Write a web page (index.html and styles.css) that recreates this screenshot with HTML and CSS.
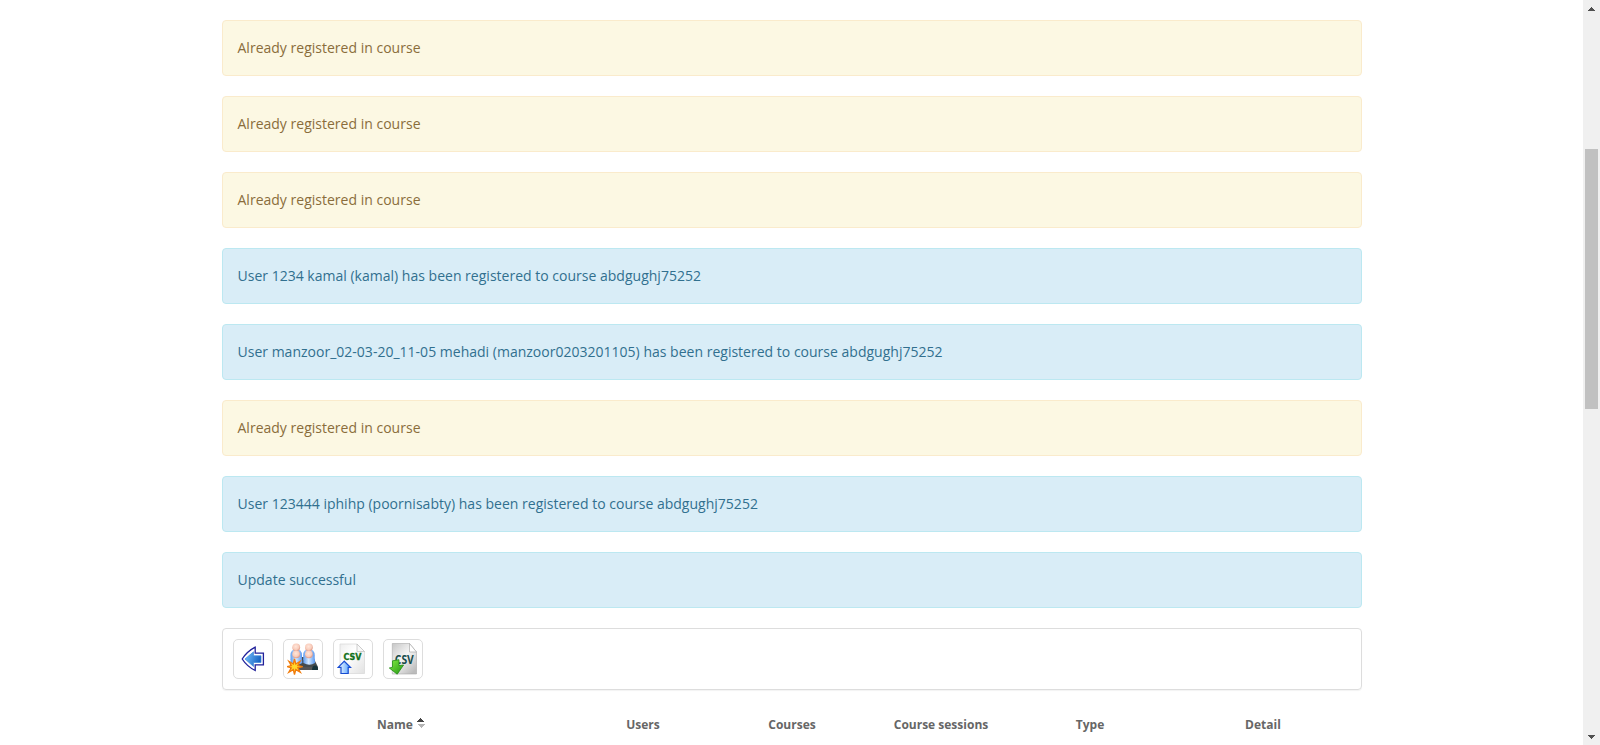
FILE: index.html
```html
<!DOCTYPE html>
<html lang="en">
<head>
<meta charset="utf-8">
<title>Classes</title>
<link rel="stylesheet" href="styles.css">
</head>
<body>
<div class="viewport">
<main class="page">
<div class="container">
<div class="alert warning">Already registered in course</div>
<div class="alert warning">Already registered in course</div>
<div class="alert warning">Already registered in course</div>
<div class="alert info">User 1234 kamal (kamal) has been registered to course abdgughj75252</div>
<div class="alert info">User manzoor_02-03-20_11-05 mehadi (manzoor0203201105) has been registered to course abdgughj75252</div>
<div class="alert warning">Already registered in course</div>
<div class="alert info">User 123444 iphihp (poornisabty) has been registered to course abdgughj75252</div>
<div class="alert info">Update successful</div>
<div class="toolbar">
<a class="tool" aria-label="Back"><svg width="32" height="32" viewBox="0 0 32 32">
<defs><linearGradient id="back" x2="1" y2=".3"><stop stop-color="#78c4ff"/><stop offset="1" stop-color="#1965c4"/></linearGradient></defs>
<path d="M5.2 16Q10 8.500 18.200 4.200V10.200H26.400V21.800H18.200V27.500Q10 23.500 5.200 16Z" fill="#fff" stroke="#20209a" stroke-width="1.300"/>
<path d="M8 16 16.500 8.800V12.800H24V19.500H16.500V23.500Z" fill="url(#back)" stroke="#3c86da" stroke-width=".7"/></svg></a>
<a class="tool" aria-label="Add classes"><svg width="32" height="32" viewBox="0 0 32 32">
<defs><linearGradient id="body" x2="1"><stop stop-color="#5f9df0"/><stop offset=".45" stop-color="#d6eaff"/><stop offset="1" stop-color="#5a98f0"/></linearGradient>
<radialGradient id="head" cx=".45" cy=".4" r=".6"><stop stop-color="#ffe6da"/><stop offset=".65" stop-color="#f9cdbc"/><stop offset="1" stop-color="#df9783"/></radialGradient></defs>
<path d="M3 20 7 14H26L31 24V27H3Z" fill="#454b4d"/><path d="M8 24H26L28 27H5Z" fill="#555"/><path d="M25 27Q25 22.500 28 22.500T31 27Z" fill="#17333b"/>
<g id="pair"><path d="M3.500 12.500Q3.500 6 9.200 6T15 12.500V17H3.500Z" fill="url(#body)"/><circle cx="9.200" cy="4.300" r="3.900" fill="url(#head)"/><path d="M3.700 20Q3 12 9.200 12T15.300 20Q10 23.500 3.700 20Z" fill="url(#body)"/><circle cx="9.200" cy="11.300" r="3.900" fill="url(#head)"/></g><use href="#pair" x="12.700"/>
<path d="m7.500 16 1.300 5 4.300-2.700-2.300 4.300 4.900 1-4.900 1.200 2.500 4.500-4.500-2.700-1.300 4.900-1.200-4.900-4.500 2.700 2.500-4.500-4-1.200 4-1-2.400-4.300 4.400 2.700Z" fill="#ffd72c" stroke="#f17b0b" stroke-width="1.300"/></svg></a>
<a class="tool" aria-label="Import users"><svg width="32" height="32" viewBox="0 0 32 32">
<defs><linearGradient id="paper" x2="1" y2="1"><stop stop-color="#eee"/><stop offset=".4" stop-color="#fff"/><stop offset="1" stop-color="#e1e1e1"/></linearGradient><linearGradient id="up" x2="1"><stop stop-color="#fff"/><stop offset="1" stop-color="#4a9dff"/></linearGradient></defs>
<path d="M3 1H20L27.500 8.500V30.500H3Z" fill="url(#paper)" stroke="#d7d7d7" stroke-width=".7"/><path d="M20 1V8.500H27.500Z" fill="#f8f8f8" stroke="#bbb" stroke-width=".7"/>
<text x="6.500" y="17" class="csv-import" textLength="18" lengthAdjust="spacingAndGlyphs">CSV</text>
<path d="M7.300 18.200 13.500 24.300H11.200V30.500H4V24.300H1.200Z" fill="url(#up)" stroke="#164bd2" stroke-width="1.200"/></svg></a>
<a class="tool" aria-label="Export users"><svg width="32" height="32" viewBox="0 0 32 32">
<defs><linearGradient id="sheet" x2=".8" y2="1"><stop stop-color="#c6c6c6"/><stop offset=".5" stop-color="#f5f5f5"/><stop offset="1" stop-color="#bcbcbc"/></linearGradient><linearGradient id="down" x2="1" y2="1"><stop stop-color="#84ef43"/><stop offset="1" stop-color="#239413"/></linearGradient></defs>
<path d="M5.300.5H22.500L29.500 9V31H5.300Z" fill="url(#sheet)" stroke="#aaa" stroke-width=".6"/><path d="M22.500.5V9H29.500Z" fill="#fff" stroke="#aaa" stroke-width=".7"/>
<text x="7.800" y="20.800" class="csv-export" textLength="19" lengthAdjust="spacingAndGlyphs">CSV</text>
<path d="M5.500 17.800 12 16.700V22.600L16.600 22 10.200 31.200 2.300 25 5.500 24.200Z" fill="url(#down)" stroke="#248b17" stroke-width=".8"/></svg></a>
</div>
<table class="classes">
<colgroup><col class="check"><col class="name"><col class="number"><col class="number"><col class="number"><col class="number"><col></colgroup>
<thead><tr><th></th><th>Name <svg class="sort" width="9" height="11" viewBox="0 0 9 11" shape-rendering="crispEdges"><path d="M3 0h1v1h1v1h1v1h1v1H0V3h1V2h1V1h1z" fill="#444"/><path d="M1 6h7v1H7v1H6v1H5v1H4V9H3V8H2V7H1z" fill="#b5b5b5"/></svg></th><th>Users</th><th>Courses</th><th>Course sessions</th><th>Type</th><th>Detail</th></tr></thead>
</table>
</div>
</main>
<div class="scrollbar">
<svg width="7" height="4" viewBox="0 0 7 4" shape-rendering="crispEdges"><path d="M3 0h1v1h1v1h1v1h1v1H0V3h1V2h1V1h1z" fill="#505050"/></svg>
<div class="thumb"></div>
<svg class="end" width="7" height="4" viewBox="0 0 7 4" shape-rendering="crispEdges"><path d="M0 0h7v1H6v1H5v1H4v1H3V3H2V2H1V1H0z" fill="#505050"/></svg>
</div>
</div>
</body>
</html>
```
FILE: styles.css
```css
* { box-sizing: border-box; }
body { margin: 0; background: #fff; color: #666; font: 14px/24px "Open Sans", sans-serif; overflow: hidden; }
.viewport { display: flex; height: 745px; }
.page { flex: 1; padding-top: 20px; overflow: hidden; }
.container { width: 1140px; margin: 0 auto; }
.alert { height: 56px; padding: 15px; margin-bottom: 20px; border: 1px solid; border-radius: 4px; letter-spacing: .01px; }
.warning { color: #8a6d3b; background: #fcf8e3; border-color: #faebcc; }
.info { color: #31708f; background: #d9edf7; border-color: #bce8f1; }
.toolbar { display: flex; gap: 10px; height: 62px; padding: 10px; border: 1px solid #ddd; border-radius: 4px; box-shadow: 0 1px 1px rgba(0,0,0,.05); }
.tool { width: 40px; height: 40px; padding: 3px; border: 1px solid #ddd; border-radius: 5px; }
.tool svg { display: block; }
.csv-import { font: bold 8.5px "DejaVu Sans", sans-serif; fill: #137019; stroke: #137019; stroke-width: .3px; }
.csv-export { font: bold 13px "Open Sans", sans-serif; fill: #174c4b; }
.classes { width: 1140px; margin-top: 20px; table-layout: fixed; border-collapse: collapse; font-size: 12px; }
.check { width: 13px; }
.name { width: 334px; }
.number { width: 149px; }
.classes th { height: 30px; padding: 0; text-align: center; }
.sort { margin-left: 1px; vertical-align: 0; }
.scrollbar { display: flex; flex-direction: column; align-items: center; width: 17px; padding: 7px 0 6px; background: #f0f0f0; }
.thumb { width: 13px; height: 260px; margin-top: 138px; background: #c1c1c1; }
.end { margin-top: auto; }
```
